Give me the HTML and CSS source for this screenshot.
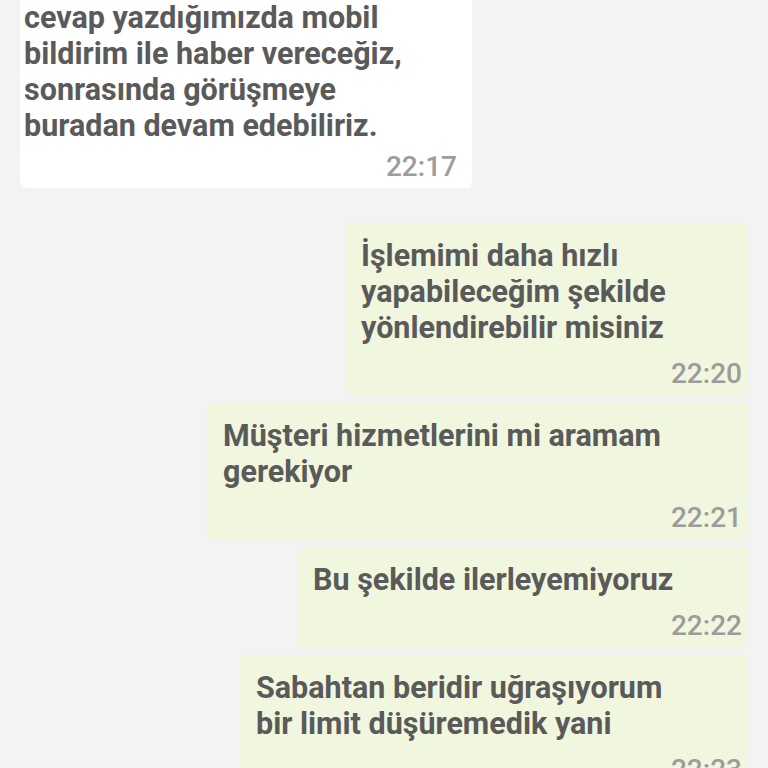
FILE: index.html
```html
<!DOCTYPE html>
<html lang="tr">
<head>
<meta charset="utf-8">
<title>Sohbet</title>
<link rel="stylesheet" href="styles.css">
</head>
<body>
<main class="chat">
  <div class="bubble in">
    <div class="text">cevap yazdığımızda mobil<br>bildirim ile haber vereceğiz,<br>sonrasında görüşmeye<br>buradan devam edebiliriz.</div>
    <div class="time">22:17</div>
  </div>
  <div class="bubble out w1">
    <div class="text">İşlemimi daha hızlı<br>yapabileceğim şekilde<br>yönlendirebilir misiniz</div>
    <div class="time">22:20</div>
  </div>
  <div class="bubble out w2">
    <div class="text">Müşteri hizmetlerini mi aramam<br>gerekiyor</div>
    <div class="time">22:21</div>
  </div>
  <div class="bubble out w3">
    <div class="text">Bu şekilde ilerleyemiyoruz</div>
    <div class="time">22:22</div>
  </div>
  <div class="bubble out w4">
    <div class="text">Sabahtan beridir uğraşıyorum<br>bir limit düşüremedik yani</div>
    <div class="time">22:23</div>
  </div>
</main>
</body>
</html>
```
FILE: styles.css
```css
html, body {
  margin: 0;
  padding: 0;
  height: 100%;
  overflow: hidden;
  background: #f3f3f3;
}
.chat {
  display: flex;
  flex-direction: column;
  padding: 0 21px 0 20px;
  font-family: Roboto, "Noto Sans", sans-serif;
}
.bubble {
  box-sizing: border-box;
  border-radius: 6px;
  padding: 15px 5px 3px 16px;
}
.bubble + .bubble {
  margin-top: 8px;
}
.in + .out {
  margin-top: 35px;
}
.in {
  align-self: flex-start;
  width: 452px;
  background: #ffffff;
  padding: 0 15px 3px 4px;
  border-radius: 0 0 6px 6px;
}
.out {
  align-self: flex-end;
  background: #f0f7de;
}
.w1 { width: 402px; }
.w2 { width: 540px; }
.w3 { width: 450px; }
.w4 { width: 507px; }
.text {
  font-size: 30.5px;
  line-height: 36px;
  font-weight: 700;
  color: #5a5a5a;
}
.time {
  text-align: right;
  font-size: 28px;
  line-height: 36px;
  font-weight: 500;
  color: #9c9c9c;
  margin-top: 10px;
}
.in .time {
  margin-top: 5px;
}
```
